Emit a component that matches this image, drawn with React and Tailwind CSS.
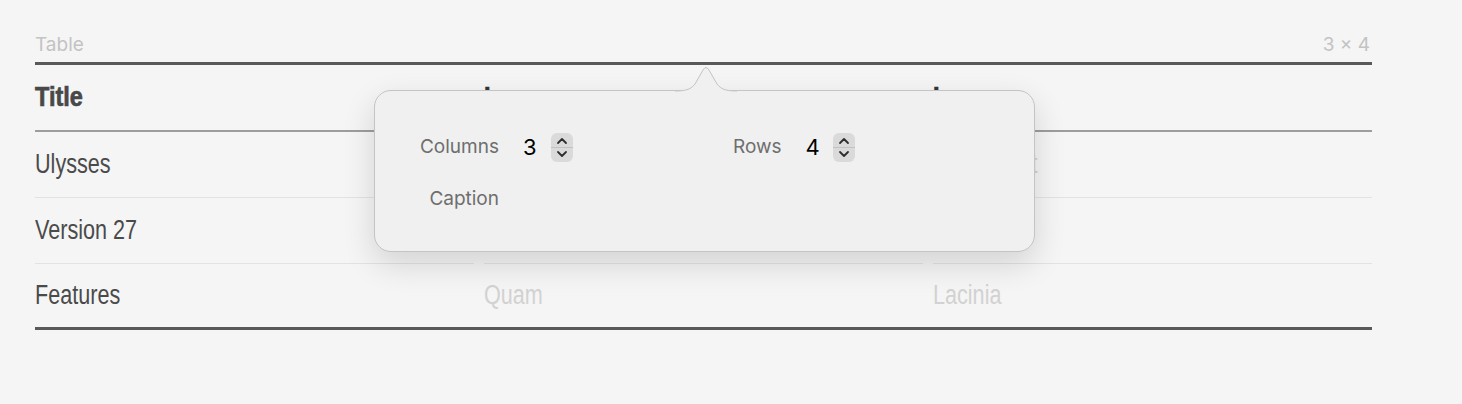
import React from "react";

const condensed = {
  fontFamily: "'Liberation Sans', Arial, sans-serif",
};
const ui = { fontFamily: "Inter, 'Liberation Sans', sans-serif" };

// middle-column cells of the first two rows sit fully under the popover
const rows = [
  ["Ulysses", "", "Consequat"],
  ["Version 27", "", "Elit"],
  ["Features", "Quam", "Lacinia"],
];

function Stepper() {
  return (
    <svg width="22" height="29" viewBox="0 0 22 29">
      <rect x="0" y="0" width="22" height="29" rx="6" fill="#dadada" />
      <line x1="0" y1="14.5" x2="22" y2="14.5" stroke="#c2c2c2" strokeWidth="1" />
      <path d="M7 10 L11 6 L15 10" fill="none" stroke="#2e2e2e" strokeWidth="1.8" strokeLinecap="round" strokeLinejoin="round" />
      <path d="M7 19 L11 23 L15 19" fill="none" stroke="#2e2e2e" strokeWidth="1.8" strokeLinecap="round" strokeLinejoin="round" />
    </svg>
  );
}

function Popover() {
  return (
    <div className="absolute left-[374px] top-[90px] w-[661px] h-[162px] rounded-[17px] border border-[#c4c4c4] bg-[#f0f0f0] shadow-[0_12px_32px_rgba(0,0,0,0.14)]">
      {/* arrow */}
      <svg
        className="absolute left-[300px] top-[-25px]"
        width="62"
        height="27"
        viewBox="0 0 62 27"
      >
        <path
          d="M0 25 C12 25 16 23 20 18 L28 4 Q31 -1 34 4 L42 18 C46 23 50 25 62 25 L62 27 L0 27 Z"
          fill="#f0f0f0"
        />
        <path
          d="M0 25 C12 25 16 23 20 18 L28 4 Q31 -1 34 4 L42 18 C46 23 50 25 62 25"
          fill="none"
          stroke="#c4c4c4"
          strokeWidth="1"
        />
      </svg>

      <div className="pl-[40px] pt-[41px]" style={ui}>
        <div className="flex items-center h-[30px]">
          <div className="flex items-center w-[318px]">
            <span className="w-[84px] text-right text-[19px] text-[#6e6e6e]">Columns</span>
            <span className="ml-[24px] text-[22px] text-black">3</span>
            <span className="ml-[14px] flex">
              <Stepper />
            </span>
          </div>
          <div className="flex items-center">
            <span className="text-[19px] text-[#6e6e6e]">Rows</span>
            <span className="ml-[24px] text-[22px] text-black">4</span>
            <span className="ml-[13px] flex">
              <Stepper />
            </span>
          </div>
        </div>
        <div className="flex items-center h-[30px] mt-[22px]">
          <span className="w-[84px] text-right text-[19px] text-[#6e6e6e]">Caption</span>
        </div>
      </div>
    </div>
  );
}

function Cond({ children, bold }) {
  return (
    <span
      className={
        "inline-block origin-left whitespace-nowrap " +
        (bold
          ? "scale-x-[0.87] font-bold [-webkit-text-stroke:0.7px_currentColor]"
          : "scale-x-[0.8]")
      }
    >
      {children}
    </span>
  );
}

export default function App() {
  return (
    <div className="relative w-[1462px] h-[404px] bg-[#f5f5f5] overflow-hidden">
      <div className="ml-[35px] w-[1337px] pt-[31px]">
        <div className="flex justify-between items-center h-[28px] text-[19px] text-[#c3c3c3]" style={ui}>
          <span>Table</span>
          <span className="pr-[2px]">3 × 4</span>
        </div>
        <div className="mt-[3px] border-t-[3px] border-[#595959]" style={condensed}>
          <div className="grid grid-cols-3 gap-x-[10px] h-[67px] border-b-2 border-[#9d9d9d] items-center text-[27px] text-[#484848]">
            <div>
              <Cond bold>Title</Cond>
            </div>
            <div className="text-[#333]">
              <Cond bold>Lorem</Cond>
            </div>
            <div className="text-[#333]">
              <Cond bold>Ipsum</Cond>
            </div>
          </div>
          {rows.map((r, i) => (
            <div key={i} className="grid grid-cols-3 gap-x-[10px] text-[27px]">
              {r.map((c, j) => (
                <div
                  key={j}
                  className={
                    "flex items-center " +
                    (i < rows.length - 1 ? "h-[66px] border-b border-[#e2e2e2] " : "h-[63px] ") +
                    (j === 0 ? "text-[#4a4a4a]" : "text-[#d2d2d2]")
                  }
                >
                  <Cond>{c}</Cond>
                </div>
              ))}
            </div>
          ))}
          <div className="border-t-[3px] border-[#595959]" />
        </div>
      </div>
      <Popover />
    </div>
  );
}
